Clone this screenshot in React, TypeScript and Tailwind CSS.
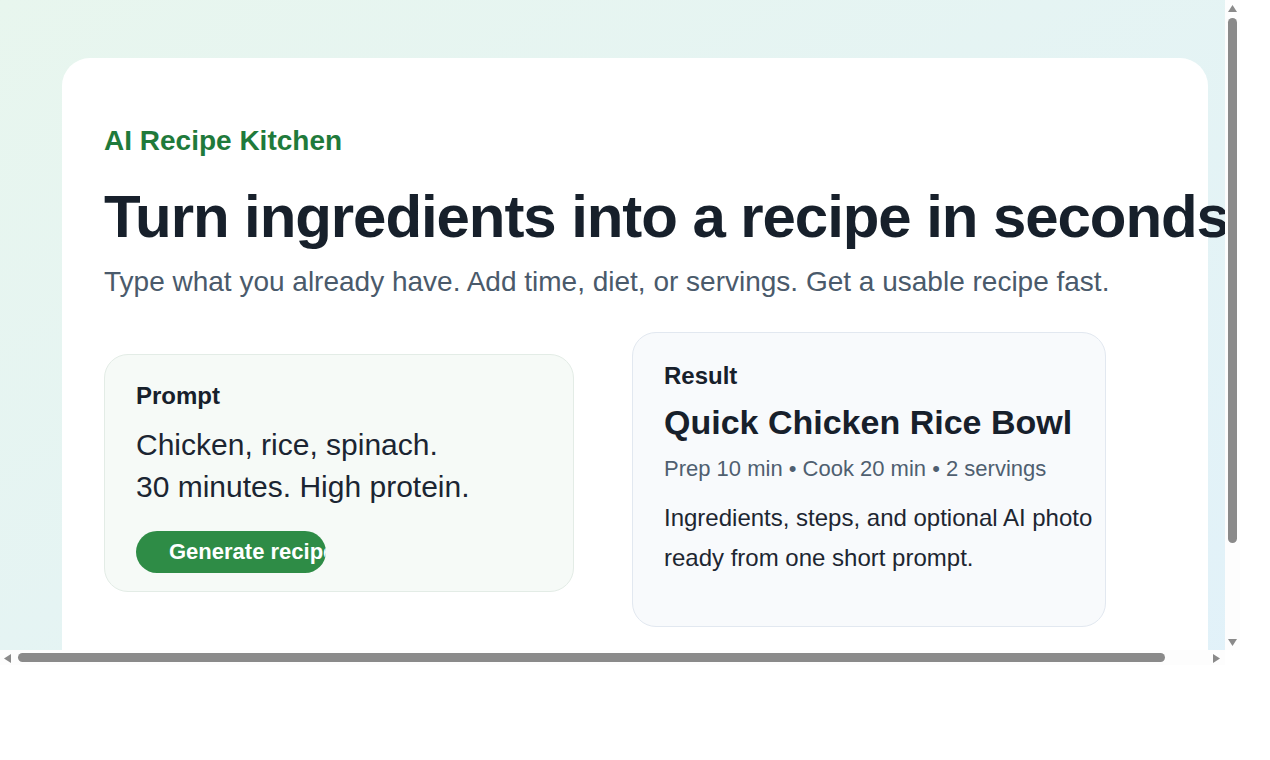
export default function App() {
    return (
        <div className="relative w-[1240px] h-[665px] bg-white font-['Liberation_Sans',Arial,sans-serif]">
            <div className="w-full h-full overflow-auto [scrollbar-width:none] [&::-webkit-scrollbar]:hidden">
                <div className="w-[1270px] px-[62px] pt-[58px] pb-[58px] bg-linear-to-br from-[#e8f6ee] to-[#e1f1fa]">
                    {/* Main card */}
                    <div className="bg-white rounded-[28px] pl-[42px] pt-[66px] pb-[91px]">
                        <p className="text-[28px] leading-[1.2] font-bold text-[#1f7a3b]">AI Recipe Kitchen</p>
                        <h1 className="mt-[26px] text-[60px] leading-[1.1] font-bold tracking-[-0.018em] text-[#17202b] whitespace-nowrap">
                            Turn ingredients into a recipe in seconds
                        </h1>
                        <p className="mt-[11px] text-[28px] leading-[1.5] text-[#4a5a6b]">
                            Type what you already have. Add time, diet, or servings. Get a usable recipe fast.
                        </p>

                        <div className="mt-[29px] flex items-start gap-[58px]">
                            {/* Prompt card */}
                            <div className="mt-[22px] w-[470px] rounded-[24px] border border-[#e3ece6] bg-[#f6faf7] pl-[31px] pr-6 pt-[25px] pb-[18px]">
                                <p className="text-[24px] leading-[1.3] font-bold text-[#17202b]">Prompt</p>
                                <p className="mt-[13px] text-[30px] leading-[1.4] text-[#1b2532]">
                                    Chicken, rice, spinach.
                                    <br />
                                    30 minutes. High protein.
                                </p>
                                <button
                                    type="button"
                                    className="mt-[23px] block w-[190px] h-[42px] overflow-hidden whitespace-nowrap rounded-full bg-[#2e8c46] pl-[33px] text-left text-[22px] font-bold text-white"
                                >
                                    Generate recipe
                                </button>
                            </div>

                            {/* Result card */}
                            <div className="w-[474px] rounded-[24px] border border-[#e2e8f0] bg-[#f8fafc] pl-[31px] pr-2 pt-[27px] pb-[48px]">
                                <p className="text-[24px] leading-[1.3] font-bold text-[#17202b]">Result</p>
                                <h2 className="mt-[11px] text-[34px] leading-[1.2] font-bold text-[#17202b]">Quick Chicken Rice Bowl</h2>
                                <p className="mt-[9px] text-[22px] leading-[1.5] text-[#4f5f70]">
                                    Prep 10 min • Cook 20 min • 2 servings
                                </p>
                                <p className="mt-[13px] text-[24px] leading-[40px] text-[#1d2631]">
                                    Ingredients, steps, and optional AI photo ready from one short prompt.
                                </p>
                            </div>
                        </div>
                    </div>
                </div>
            </div>

            {/* Vertical scrollbar */}
            <div className="absolute right-0 top-0 w-[15px] h-[650px] bg-[#fdfdfd]">
                <svg className="absolute left-[3px] top-[5px]" width="9" height="7" viewBox="0 0 9 7">
                    <polygon points="4.5,0 9,7 0,7" fill="#8a8a8a" />
                </svg>
                <div className="absolute left-[3px] top-[18px] w-[9px] h-[525px] rounded-full bg-[#8a8a8a]" />
                <svg className="absolute left-[3px] top-[639px]" width="9" height="7" viewBox="0 0 9 7">
                    <polygon points="0,0 9,0 4.5,7" fill="#8a8a8a" />
                </svg>
            </div>

            {/* Horizontal scrollbar */}
            <div className="absolute left-0 bottom-0 w-[1225px] h-[15px] bg-[#fdfdfd]">
                <svg className="absolute left-[4px] top-[4px]" width="7" height="9" viewBox="0 0 7 9">
                    <polygon points="0,4.5 7,0 7,9" fill="#8a8a8a" />
                </svg>
                <div className="absolute left-[18px] top-[3px] w-[1147px] h-[9px] rounded-full bg-[#8a8a8a]" />
                <svg className="absolute left-[1213px] top-[4px]" width="7" height="9" viewBox="0 0 7 9">
                    <polygon points="0,0 7,4.5 0,9" fill="#8a8a8a" />
                </svg>
            </div>
            <div className="absolute right-0 bottom-0 w-[15px] h-[15px] bg-white" />
        </div>
    )
}
